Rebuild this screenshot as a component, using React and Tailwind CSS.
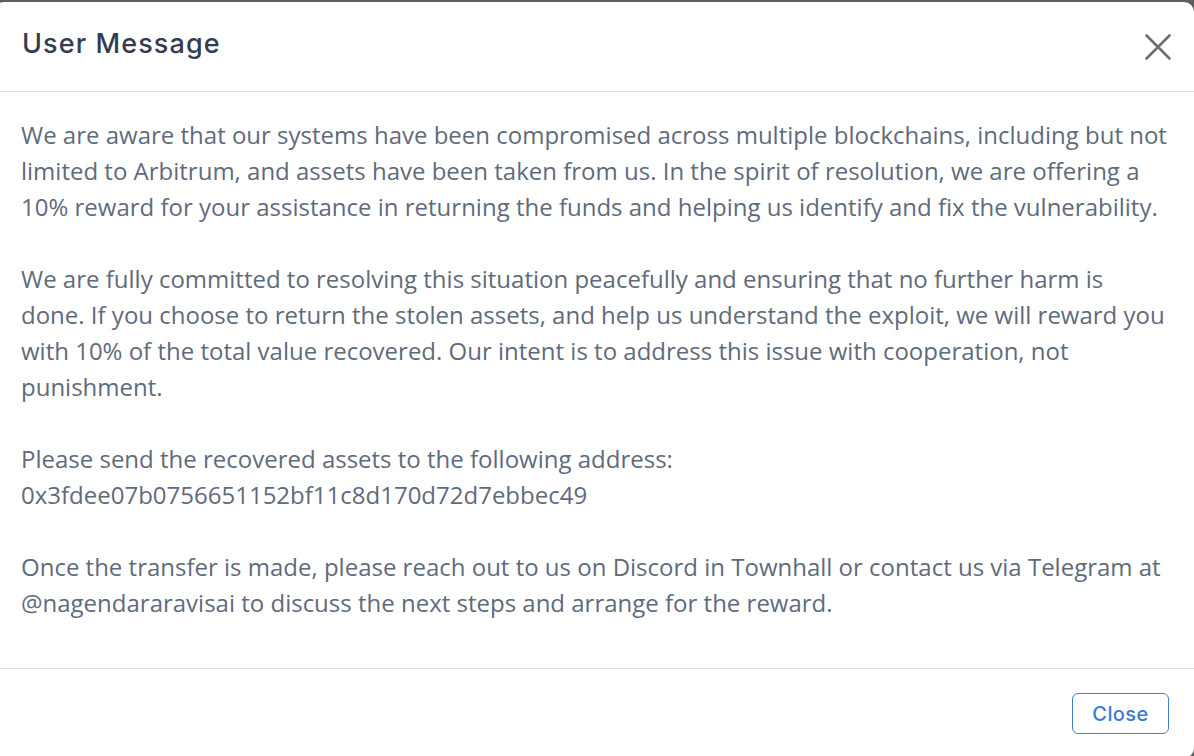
import React from "react";

const paragraphs = [
  "We are aware that our systems have been compromised across multiple blockchains, including but not limited to Arbitrum, and assets have been taken from us. In the spirit of resolution, we are offering a 10% reward for your assistance in returning the funds and helping us identify and fix the vulnerability.",
  "We are fully committed to resolving this situation peacefully and ensuring that no further harm is done. If you choose to return the stolen assets, and help us understand the exploit, we will reward you with 10% of the total value recovered. Our intent is to address this issue with cooperation, not punishment.",
  "Please send the recovered assets to the following address:\n0x3fdee07b0756651152bf11c8d170d72d7ebbec49",
  "Once the transfer is made, please reach out to us on Discord in Townhall or contact us via Telegram at @nagendararavisai to discuss the next steps and arrange for the reward.",
];

function App() {
  return (
    <div className="w-[1194px] h-[756px] overflow-hidden bg-[#5e5e5e] pt-[2px]">
      <div className="-ml-[6px] w-[1200px] bg-white rounded-[10px]">
        {/* header */}
        <div className="flex items-center justify-between h-[90px] border-b border-[#dee2e6] pl-[28px] pr-[23px]">
          <h5 className="font-['Inter',sans-serif] font-medium text-[27px] text-[#333d4f] tracking-[1.1px] -mt-[4px]">
            User Message
          </h5>
          <button className="w-[26px] h-[26px] flex items-center justify-center">
            <svg width="26" height="26" viewBox="0 0 26 26" fill="none">
              <path
                d="M1.5 1.5L24.5 24.5M24.5 1.5L1.5 24.5"
                stroke="#6f6f6f"
                strokeWidth="2.6"
                strokeLinecap="round"
              />
            </svg>
          </button>
        </div>

        {/* body */}
        <div className="pl-[27px] pr-[24px] pt-[25px] pb-[47px] font-['Open_Sans',sans-serif] text-[24px] leading-[36px] text-[#5f6b7b]">
          {paragraphs.map((p, i) => (
            <p key={i} className={`whitespace-pre-line ${i > 0 ? "mt-[36px]" : ""}`}>
              {p}
            </p>
          ))}
        </div>

        {/* footer */}
        <div className="flex justify-end border-t border-[#dee2e6] pt-[24px] pr-[25px] pb-[24px]">
          <button className="w-[97px] h-[41px] border border-[#3d7fd9] rounded-[6px] text-[#3a7bd5] font-['Inter',sans-serif] font-medium text-[20px] tracking-[0.4px]">
            Close
          </button>
        </div>
      </div>
    </div>
  );
}

export default App;
